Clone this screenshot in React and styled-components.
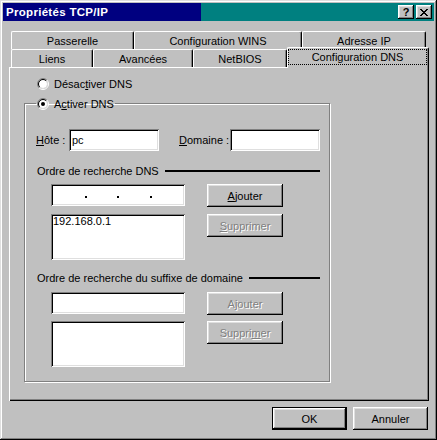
import React from "react";
import styled, { createGlobalStyle, css } from "styled-components";

const GlobalStyle = createGlobalStyle`
  body {
    margin: 0;
    background: #c0c0c0;
  }
  * {
    box-sizing: border-box;
  }
`;

const bevelOut = css`
  box-shadow: inset -1px -1px #000, inset 1px 1px #fff, inset -2px -2px #808080,
    inset 2px 2px #dfdfdf;
`;

const bevelIn = css`
  box-shadow: inset 1px 1px #808080, inset -1px -1px #fff, inset 2px 2px #000,
    inset -2px -2px #dfdfdf;
`;

const Window = styled.div`
  width: 437px;
  height: 440px;
  padding: 3px;
  background: #c0c0c0;
  font-family: "Liberation Sans", Arial, sans-serif;
  font-size: 11px;
  color: #000;
  display: flex;
  flex-direction: column;
  box-shadow: inset -1px -1px #000, inset 1px 1px #dfdfdf, inset -2px -2px #808080,
    inset 2px 2px #fff;
`;

const TitleBar = styled.div`
  height: 18px;
  display: flex;
  align-items: center;
  gap: 2px;
  padding: 0 2px 0 3px;
  background: linear-gradient(to right, #000080 0, #000080 198px, #008080 198px);
`;

const Title = styled.div`
  flex: 1;
  color: #fff;
  font-weight: bold;
  font-size: 11.5px;
  letter-spacing: 0.3px;
`;

const TitleButton = styled.div`
  width: 16px;
  height: 14px;
  background: #c0c0c0;
  display: flex;
  align-items: center;
  justify-content: center;
  font-weight: bold;
  font-size: 11px;
  line-height: 1;
  ${bevelOut}
`;

const Body = styled.div`
  padding: 10px 5px 0 6px;
  display: flex;
  flex-direction: column;
`;

const TabRow = styled.div`
  display: flex;
  height: 18px;
  padding-left: 2px;
  align-items: flex-end;
`;

const Tab = styled.div`
  flex: none;
  width: ${(p) => p.$w}px;
  height: 18px;
  background: #c0c0c0;
  border-top: 1px solid #fff;
  border-left: 1px solid #fff;
  border-right: 1px solid #000;
  border-radius: 2px 2px 0 0;
  box-shadow: inset -1px 0 #808080;
  display: flex;
  align-items: center;
  justify-content: center;
  ${(p) =>
    p.$active &&
    css`
      height: 21px;
      margin-bottom: -1px;
      position: relative;
      z-index: 1;
      padding: 1px 1px 3px 0;
      align-items: stretch;
    `}
`;

const FocusLabel = styled.span`
  flex: 1;
  border: 1px dotted #000;
  display: flex;
  align-items: center;
  justify-content: center;
`;

const Panel = styled.div`
  height: 334px;
  padding: 10px 0 0 15px;
  box-shadow: inset 1px 1px #fff, inset -1px -1px #000, inset -2px -2px #808080;
`;

const RadioRow = styled.div`
  display: flex;
  align-items: center;
  gap: 5px;
  height: 13px;
  margin-left: 13px;
`;

const GroupBox = styled.fieldset`
  width: 306px;
  margin: 7px 0 0 0;
  padding: 0 9px 14px 11px;
  border: 1px solid #808080;
  box-shadow: inset 1px 1px #fff, 1px 1px #fff;
`;

const Legend = styled.legend`
  padding: 0 1px;
  height: 13px;
  display: flex;
  align-items: center;
  gap: 5px;
`;

const FieldRow = styled.div`
  display: flex;
  align-items: center;
  height: 22px;
  margin-top: 19px;
`;

const FieldLabel = styled.span`
  width: ${(p) => p.$w}px;
  flex: none;
`;

const TextBox = styled.div`
  width: ${(p) => p.$w}px;
  height: ${(p) => p.$h || 22}px;
  flex: none;
  background: #fff;
  padding: ${(p) => (p.$list ? "1px 2px" : "0 3px")};
  display: flex;
  align-items: ${(p) => (p.$list ? "flex-start" : "center")};
  line-height: 13px;
  ${bevelIn}
`;

const IpBox = styled(TextBox)`
  justify-content: space-evenly;
  align-items: flex-start;
  padding-top: 12px;
`;

const IpDot = styled.span`
  width: 2px;
  height: 2px;
  background: #000;
`;

const SubHeader = styled.div`
  display: flex;
  align-items: center;
  gap: 6px;
  height: 13px;
  margin: ${(p) => p.$top}px 0 0 1px;

  &::after {
    content: "";
    flex: 1;
    height: 2px;
    background: #000;
  }
`;

const Section = styled.div`
  display: grid;
  grid-template-columns: 134px 76px;
  column-gap: 22px;
  row-gap: ${(p) => p.$gap}px;
  align-items: start;
  margin: ${(p) => p.$top}px 0 0 15px;
`;

const Button = styled.div`
  width: ${(p) => p.$w || 75}px;
  height: 23px;
  background: #c0c0c0;
  display: flex;
  align-items: center;
  justify-content: center;
  ${bevelOut}
  ${(p) =>
    p.$disabled &&
    css`
      color: #808080;
      text-shadow: 1px 1px 0 #fff;
    `}
  ${(p) =>
    p.$default &&
    css`
      border: 1px solid #000;
    `}
`;

const Footer = styled.div`
  display: flex;
  justify-content: flex-end;
  gap: 6px;
  padding: 6px 1px 0 0;
`;

const RadioIcon = ({ checked }) => (
  <svg width="12" height="12" viewBox="0 0 12 12" style={{ flex: "none" }}>
    <path d="M2.1 9.9A5.5 5.5 0 0 1 9.9 2.1" fill="none" stroke="#808080" />
    <path d="M9.9 2.1A5.5 5.5 0 0 1 2.1 9.9" fill="none" stroke="#fff" />
    <circle cx="6" cy="6" r="4" fill="#fff" />
    <path d="M2.8 9.2A4.5 4.5 0 0 1 9.2 2.8" fill="none" stroke="#000" />
    <path d="M9.2 2.8A4.5 4.5 0 0 1 2.8 9.2" fill="none" stroke="#dfdfdf" />
    {checked && <circle cx="6" cy="6" r="2" fill="#000" />}
  </svg>
);

const CloseIcon = () => (
  <svg width="8" height="7" viewBox="0 0 8 7" shapeRendering="crispEdges">
    <path
      d="M0 0h2v1h-2zM6 0h2v1h-2zM1 1h2v1h-2zM5 1h2v1h-2zM2 2h4v1h-4zM3 3h2v1h-2zM2 4h4v1h-4zM1 5h2v1h-2zM5 5h2v1h-2zM0 6h2v1h-2zM6 6h2v1h-2z"
      fill="#000"
    />
  </svg>
);

const backTabs = [
  { label: "Passerelle", w: 123 },
  { label: "Configuration WINS", w: 168 },
  { label: "Adresse IP", w: 124 },
];

const frontTabs = [
  { label: "Liens", w: 82 },
  { label: "Avancées", w: 100 },
  { label: "NetBIOS", w: 94 },
];

export default function App() {
  return (
    <>
      <GlobalStyle />
      <Window>
        <TitleBar>
          <Title>Propriétés TCP/IP</Title>
          <TitleButton>?</TitleButton>
          <TitleButton>
            <CloseIcon />
          </TitleButton>
        </TitleBar>

        <Body>
          <TabRow>
            {backTabs.map((t) => (
              <Tab key={t.label} $w={t.w}>
                {t.label}
              </Tab>
            ))}
          </TabRow>
          <TabRow>
            {frontTabs.map((t) => (
              <Tab key={t.label} $w={t.w}>
                {t.label}
              </Tab>
            ))}
            <Tab $w={142} $active>
              <FocusLabel>Configuration DNS</FocusLabel>
            </Tab>
          </TabRow>

          <Panel>
            <RadioRow>
              <RadioIcon />
              <span>
                Désac<u>t</u>iver DNS
              </span>
            </RadioRow>

            <GroupBox>
              <Legend>
                <RadioIcon checked />
                <span>
                  A<u>c</u>tiver DNS
                </span>
              </Legend>

              <FieldRow>
                <FieldLabel $w={33}>
                  <u>H</u>ôte :
                </FieldLabel>
                <TextBox $w={90}>pc</TextBox>
                <FieldLabel $w={51} style={{ marginLeft: 20 }}>
                  <u>D</u>omaine :
                </FieldLabel>
                <TextBox $w={90} />
              </FieldRow>

              <SubHeader $top={13}>Ordre de recherche DNS</SubHeader>
              <Section $top={7} $gap={7}>
                <IpBox $w={134}>
                  <IpDot />
                  <IpDot />
                  <IpDot />
                </IpBox>
                <Button $w={76}>
                  <span>
                    <u>A</u>jouter
                  </span>
                </Button>
                <TextBox $w={134} $h={46} $list>
                  192.168.0.1
                </TextBox>
                <Button $w={76} $disabled>
                  <span>
                    <u>S</u>upprimer
                  </span>
                </Button>
              </Section>

              <SubHeader $top={11}>Ordre de recherche du suffixe de domaine</SubHeader>
              <Section $top={8} $gap={6}>
                <TextBox $w={134} />
                <Button $w={76} $disabled>
                  <span>
                    A<u>j</u>outer
                  </span>
                </Button>
                <TextBox $w={134} $h={46} $list />
                <Button $w={76} $disabled>
                  <span>
                    Suppri<u>m</u>er
                  </span>
                </Button>
              </Section>
            </GroupBox>
          </Panel>

          <Footer>
            <Button $default>OK</Button>
            <Button>Annuler</Button>
          </Footer>
        </Body>
      </Window>
    </>
  );
}
